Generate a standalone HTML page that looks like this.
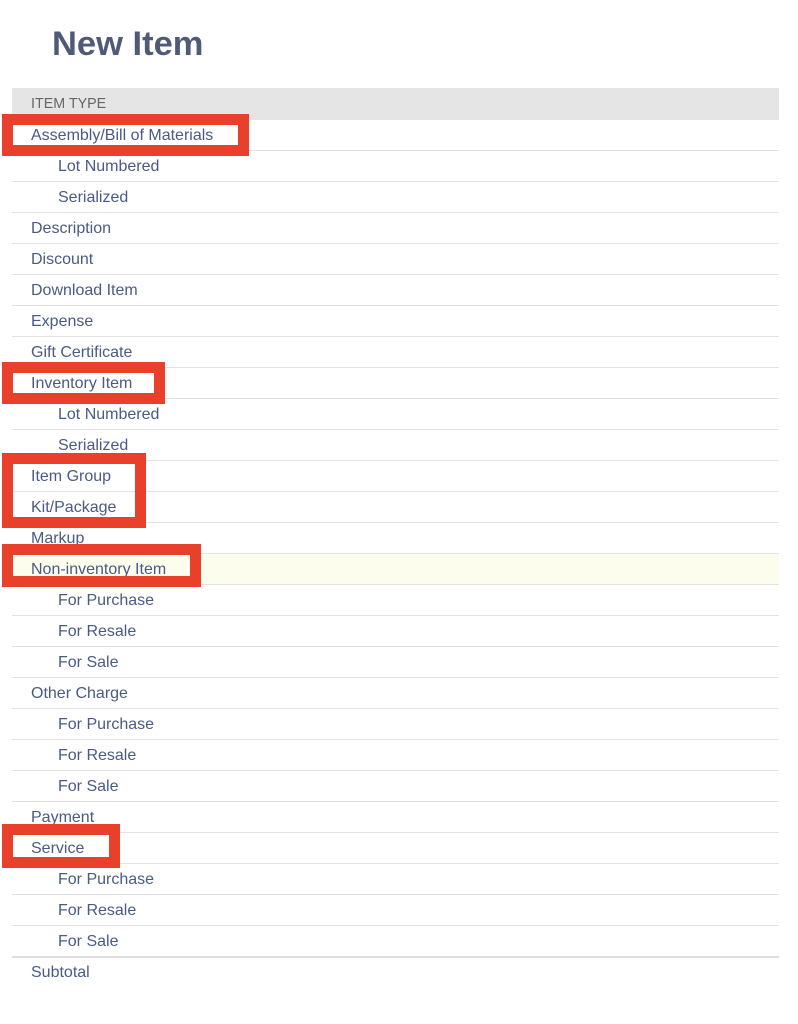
<!DOCTYPE html>
<html><head><style>
body{margin:0;width:798px;height:1024px;background:#fff;font-family:"Liberation Sans",Arial,sans-serif;position:relative;overflow:hidden}
h1{position:absolute;left:52px;top:25px;margin:0;font-size:34.5px;font-weight:bold;color:#4f5b76}
.hdr{position:absolute;left:12px;top:88px;width:767px;height:32px;background:#e5e5e5;color:#666;font-size:14.3px;line-height:32px;text-indent:19px}
.r{position:absolute;left:12px;width:767px;height:30px;border-bottom:1px solid #e3e3e3;color:#4a5a86;font-size:16px;line-height:32px;text-indent:19px}
.r.i{text-indent:46px}
.box{position:absolute;border:11px solid #e8402a;box-sizing:border-box}
</style></head><body>
<h1>New Item</h1>
<div class="hdr">ITEM TYPE</div>
<div id="rows"></div>
<script>
var items=[["Assembly/Bill of Materials",0],["Lot Numbered",1],["Serialized",1],["Description",0],["Discount",0],["Download Item",0],["Expense",0],["Gift Certificate",0],["Inventory Item",0],["Lot Numbered",1],["Serialized",1],["Item Group",0],["Kit/Package",0],["Markup",0],["Non-inventory Item",0],["For Purchase",1],["For Resale",1],["For Sale",1],["Other Charge",0],["For Purchase",1],["For Resale",1],["For Sale",1],["Payment",0],["Service",0],["For Purchase",1],["For Resale",1],["For Sale",1],["Subtotal",0]];
var h="";items.forEach(function(t,k){var st="top:"+(120+31*k)+"px;";if(k==14)st+="background:#fdfdee;";if(k==26)st+="border-bottom:2px solid #ddd;";if(k==27)st+="border-bottom:none;";h+='<div class="r'+(t[1]?' i':'')+'" style="'+st+'">'+t[0]+'</div>';});
document.getElementById("rows").innerHTML=h;
</script>
<div class="box" style="left:2px;top:114px;width:247px;height:42px"></div>
<div class="box" style="left:2px;top:362px;width:163px;height:42px"></div>
<div class="box" style="left:2px;top:453px;width:144px;height:75px"></div>
<div class="box" style="left:2px;top:544px;width:199px;height:43px"></div>
<div class="box" style="left:2px;top:824px;width:118px;height:44px"></div>
</body></html>
